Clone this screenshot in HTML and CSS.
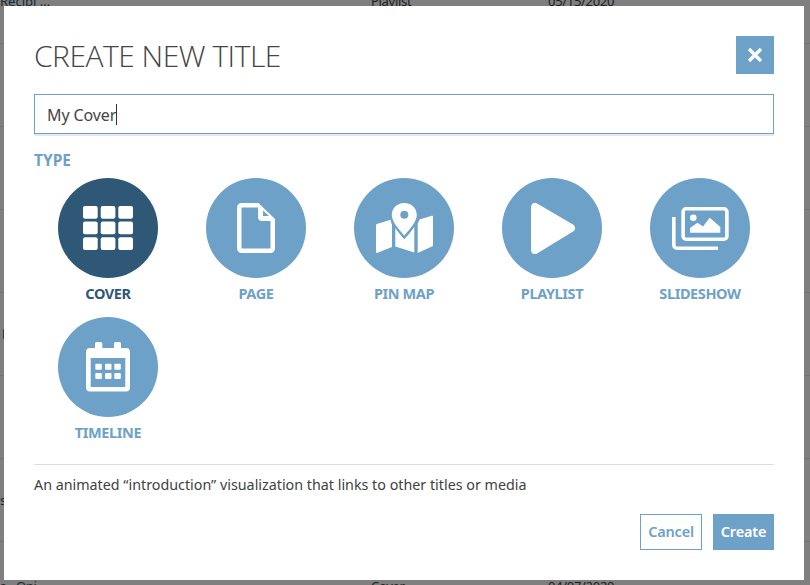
FILE: index.html
```html
<!DOCTYPE html>
<html lang="en">
<head>
<meta charset="utf-8">
<title>Create New Title</title>
<link rel="stylesheet" href="styles.css">
</head>
<body>
<main class="page">
  <div class="row row-first"><span class="c-name">Recipi ...</span><span>Playlist</span><span>05/15/2020</span></div>
  <div class="row"></div>
  <div class="row"></div>
  <div class="row"></div>
  <div class="row"><span class="c-name c-inset">l</span></div>
  <div class="row"></div>
  <div class="row"><span class="c-name">s</span></div>
  <div class="row row-last"><span class="c-name">s - Oni</span><span>Cover</span><span>04/07/2020</span></div>
</main>
<div class="overlay"></div>
<section class="modal">
  <header class="modal-head">
    <h1 class="modal-title">CREATE NEW TITLE</h1>
    <button class="close" aria-label="Close">
      <svg width="16" height="16" viewBox="0 0 16 16"><path d="M2 2l12 12M14 2L2 14" stroke="#fff" stroke-width="3.2" fill="none"/></svg>
    </button>
  </header>
  <div class="field"><span class="field-text">My Cover</span><span class="caret"></span></div>
  <div class="type-label">TYPE</div>
  <div class="types">
    <div class="type active">
      <div class="circle">
        <svg width="50" height="44" viewBox="0 0 50 44"><g fill="#fff"><rect x="0" y="0" width="14.700" height="12.700" rx="2"/><rect x="17.700" y="0" width="14.700" height="12.700" rx="2"/><rect x="35.300" y="0" width="14.700" height="12.700" rx="2"/><rect x="0" y="15.600" width="14.700" height="12.700" rx="2"/><rect x="17.700" y="15.600" width="14.700" height="12.700" rx="2"/><rect x="35.300" y="15.600" width="14.700" height="12.700" rx="2"/><rect x="0" y="31.300" width="14.700" height="12.700" rx="2"/><rect x="17.700" y="31.300" width="14.700" height="12.700" rx="2"/><rect x="35.300" y="31.300" width="14.700" height="12.700" rx="2"/></g></svg>
      </div>
      <div class="type-name">COVER</div>
    </div>
    <div class="type">
      <div class="circle">
        <svg width="38" height="50" viewBox="0 0 38 50"><path fill="#fff" fill-rule="evenodd" d="M4.500 0H21.500L38 16V45.500A4.500 4.500 0 0 1 33.500 50H4.500A4.500 4.500 0 0 1 0 45.500V4.500A4.500 4.500 0 0 1 4.500 0ZM5.500 4.500A1 1 0 0 0 4.500 5.500V44.500A1 1 0 0 0 5.500 45.500H32.500A1 1 0 0 0 33.500 44.500V18H25A4 4 0 0 1 21 14V4.500ZM26 7.500V13H32Z"/></svg>
      </div>
      <div class="type-name">PAGE</div>
    </div>
    <div class="type">
      <div class="circle">
        <svg width="57" height="50" viewBox="0 0 57 50"><g fill="#fff"><path fill-rule="evenodd" d="M28.300 0C21 0 15.800 5.400 15.800 12C15.800 18.500 22.500 26 28.300 32.500C34 26 40.800 18.500 40.800 12C40.800 5.400 35.600 0 28.300 0ZM28.300 7.700A4 4 0 1 1 28.300 15.700A4 4 0 1 1 28.300 7.700Z"/><path d="M0.700 21L14.500 16.700C15 19 15.500 20.500 16 21.500V44L1 50A1 1 0 0 1 0 49V22Z"/><path d="M19.300 25C22 29 25 32.500 28.300 36.300C32 32.500 35.500 28 38.300 24V49.500L19.300 43.500Z"/><path d="M41.700 20.500C42.500 19 43 18 43.500 16.500L55.800 12.700A1 1 0 0 1 57 13.700V43L41.700 50Z"/></g></svg>
      </div>
      <div class="type-name">PIN MAP</div>
    </div>
    <div class="type">
      <div class="circle">
        <svg class="play" width="44" height="51" viewBox="0 0 44 51"><path d="M4 4V47L40 25Z" fill="#fff" stroke="#fff" stroke-width="8" stroke-linejoin="round"/></svg>
      </div>
      <div class="type-name">PLAYLIST</div>
    </div>
    <div class="type">
      <div class="circle">
        <svg width="57" height="43" viewBox="0 0 57 43"><g fill="none" stroke="#fff" stroke-width="3.600"><rect x="11.100" y="1.800" width="43.800" height="30.400" rx="3"/><path d="M1.800 10V38A3.200 3.200 0 0 0 5 41.200H46"/></g><g fill="#fff"><circle cx="21.300" cy="10.700" r="3.300"/><path d="M18 25.700V21L25.500 15.700L31 19.500L37.700 10.700L48.300 20V25.700Z"/></g></svg>
      </div>
      <div class="type-name">SLIDESHOW</div>
    </div>
    <div class="type">
      <div class="circle">
        <svg width="44" height="50" viewBox="0 0 44 50"><path fill="#fff" fill-rule="evenodd" d="M9 1.500A1.500 1.500 0 0 1 10.500 0H14.800A1.500 1.500 0 0 1 16.300 1.500V6H28V1.500A1.500 1.500 0 0 1 29.500 0H33.500A1.500 1.500 0 0 1 35 1.500V6H40A4 4 0 0 1 44 10V45.500A4 4 0 0 1 40 49.500H4A4 4 0 0 1 0 45.500V10A4 4 0 0 1 4 6H9ZM4.700 16V45H39.300V16Z"/><g fill="#fff"><rect x="9.300" y="21.700" width="6.500" height="6" rx="1"/><rect x="19" y="21.700" width="6.500" height="6" rx="1"/><rect x="28.300" y="21.700" width="6.500" height="6" rx="1"/><rect x="9.300" y="31" width="6.500" height="6" rx="1"/><rect x="19" y="31" width="6.500" height="6" rx="1"/><rect x="28.300" y="31" width="6.500" height="6" rx="1"/></g></svg>
      </div>
      <div class="type-name">TIMELINE</div>
    </div>
  </div>
  <div class="divider"></div>
  <p class="desc">An animated “introduction” visualization that links to other titles or media</p>
  <footer class="actions">
    <button class="btn btn-cancel">Cancel</button>
    <button class="btn btn-create">Create</button>
  </footer>
</section>
</body>
</html>
```

FILE: styles.css
```css
* { box-sizing: border-box; }
html, body { margin: 0; height: 100%; overflow: hidden; }
body { font-family: "Noto Sans", "Open Sans", sans-serif; background: #fff; color: #3f3f3f; }

.page { height: 585px; display: flex; flex-direction: column; }
.row { height: 83px; flex: none; border-bottom: 1px solid #e4e4e4; display: grid; grid-template-columns: 371px 177px 1fr; align-items: center; font-size: 13px; line-height: 16px; letter-spacing: -.3px; }
.row-first { height: 44px; align-items: start; }
.row-first span { margin-top: -7px; }
.row-first .c-name { letter-spacing: 0; }
.row-last { height: 43px; border-bottom: 0; align-items: start; }
.row-last span { margin-top: 36px; }
.c-name { color: #2e5775; }
.c-inset { padding-left: 2px; }
.overlay { position: fixed; inset: 0; background: rgba(0, 0, 0, .5); }

.modal { position: fixed; left: 4px; top: 6px; width: 800px; height: 574px; background: #fff; padding: 30px 30px 0; display: flex; flex-direction: column; }
.modal-head { display: flex; justify-content: space-between; align-items: flex-start; height: 58px; }
.modal-title { margin: 0; font-family: "Open Sans", sans-serif; font-size: 30px; font-weight: 300; line-height: 40px; color: #454545; letter-spacing: -.5px; }
.close { width: 38px; height: 38px; background: #6da1c7; border: 0; padding: 0; display: flex; align-items: center; justify-content: center; }

.field { height: 40px; border: 1px solid #6da1c7; box-shadow: 0 2px 0 #e6e9ed; display: flex; align-items: center; padding: 1px 0 0 12px; font-size: 16px; color: #454545; margin-bottom: 18px; }
.field-text { letter-spacing: -.1px; }
.caret { width: 1px; height: 21px; background: #333; }

.type-label { font-size: 15.500px; font-weight: 700; line-height: 16px; color: #6da1c7; margin-bottom: 10px; height: 16px; }
.types { display: grid; grid-template-columns: repeat(5, 100px); column-gap: 48px; row-gap: 16px; padding-left: 24px; align-content: start; }
.type { display: flex; flex-direction: column; align-items: center; }
.circle { width: 100px; height: 100px; border-radius: 50%; background: #6da1c7; display: flex; align-items: center; justify-content: center; }
.active .circle { background: #2f5876; }
.play { margin-left: 1px; }
.type-name { margin-top: 7px; font-size: 14.500px; font-weight: 700; line-height: 16px; color: #6da1c7; letter-spacing: -.4px; }
.active .type-name { color: #2f5876; }

.divider { height: 1px; background: #dcdcdc; margin-top: 24px; }
.desc { margin: 11px 0 0; font-size: 14.300px; line-height: 18px; color: #3f3f3f; }
.actions { display: flex; justify-content: flex-end; gap: 11px; margin-top: 20px; }
.btn { height: 36px; font: 600 14.500px/1 "Noto Sans", sans-serif; padding: 0 0 2px; letter-spacing: -.2px; }
.btn-cancel { width: 62px; background: #fff; border: 1px solid #6da1c7; color: #6da1c7; }
.btn-create { width: 61px; background: #6da1c7; border: 1px solid #6da1c7; color: #fff; }
```
